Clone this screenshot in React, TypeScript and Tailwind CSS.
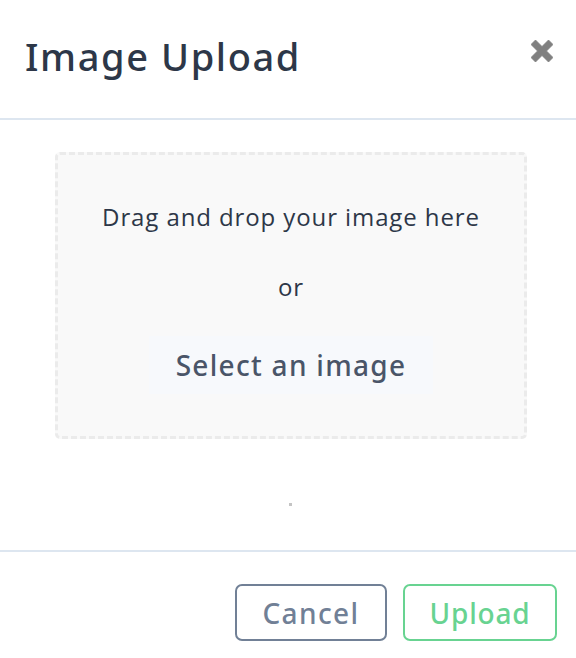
import { useState } from 'react'

export default function App() {
  const [dragging, setDragging] = useState(false)

  return (
    <div className="w-[576px] h-[658px] bg-white flex flex-col font-[family-name:'Open_Sans',sans-serif]">
      <header className="h-[120px] shrink-0 flex items-center justify-between pl-[25px] pr-[23px] pb-[5px] border-b-2 border-[#dde6f0]">
        <h1 className="font-[family-name:'Noto_Sans',sans-serif] text-[38px] font-medium tracking-[1.6px] text-[#2d3748]">
          Image Upload
        </h1>
        <button className="w-[22px] h-[22px] mb-[12px]" aria-label="Close">
          <svg viewBox="0 0 22 22" className="w-[22px] h-[22px]">
            <path
              d="M0 4.5 4.5 0 11 6.5 17.5 0 22 4.5 15.5 11 22 17.5 17.5 22 11 15.5 4.5 22 0 17.5 6.5 11Z"
              fill="#808080"
              stroke="#808080"
              strokeWidth="0.8"
              strokeLinejoin="round"
            />
          </svg>
        </button>
      </header>

      <main className="h-[432px] shrink-0 flex flex-col pt-[32px] pl-[55px] border-b-2 border-[#dde6f0]">
        <div
          onDragOver={(e) => {
            e.preventDefault()
            setDragging(true)
          }}
          onDragLeave={() => setDragging(false)}
          className={`w-[472px] h-[287px] flex flex-col items-center rounded-[5px] border-[3px] border-dashed ${
            dragging ? 'border-[#68d391]' : 'border-[#ebebeb]'
          } bg-[#f9f9f9]`}
        >
          <p className="mt-[44px] text-[24px] leading-[36px] tracking-[0.9px] text-[#2d3748]">
            Drag and drop your image here
          </p>
          <p className="mt-[34px] text-[24px] leading-[36px] tracking-[0.9px] text-[#2d3748]">or</p>
          <button className="mt-[31px] w-[284px] h-[58px] bg-[#f7f9fc] font-[family-name:'Noto_Sans',sans-serif] text-[28px] font-medium tracking-[1.3px] text-[#4a5568]">
            Select an image
          </button>
        </div>
        <div className="mt-[64px] ml-[234px] w-[3px] h-[3px] bg-[#c4c4c4]" />
      </main>

      <footer className="flex-1 flex items-start justify-end gap-[16px] pt-[32px] pr-[19px]">
        <button className="w-[152px] h-[57px] rounded-[7px] border-2 border-[#718096] font-[family-name:'Noto_Sans',sans-serif] text-[28px] font-medium tracking-[1.4px] text-[#718096]">
          Cancel
        </button>
        <button className="w-[154px] h-[57px] rounded-[7px] border-2 border-[#68d391] font-[family-name:'Noto_Sans',sans-serif] text-[28px] font-medium tracking-[0.8px] text-[#68d391]">
          Upload
        </button>
      </footer>
    </div>
  )
}
